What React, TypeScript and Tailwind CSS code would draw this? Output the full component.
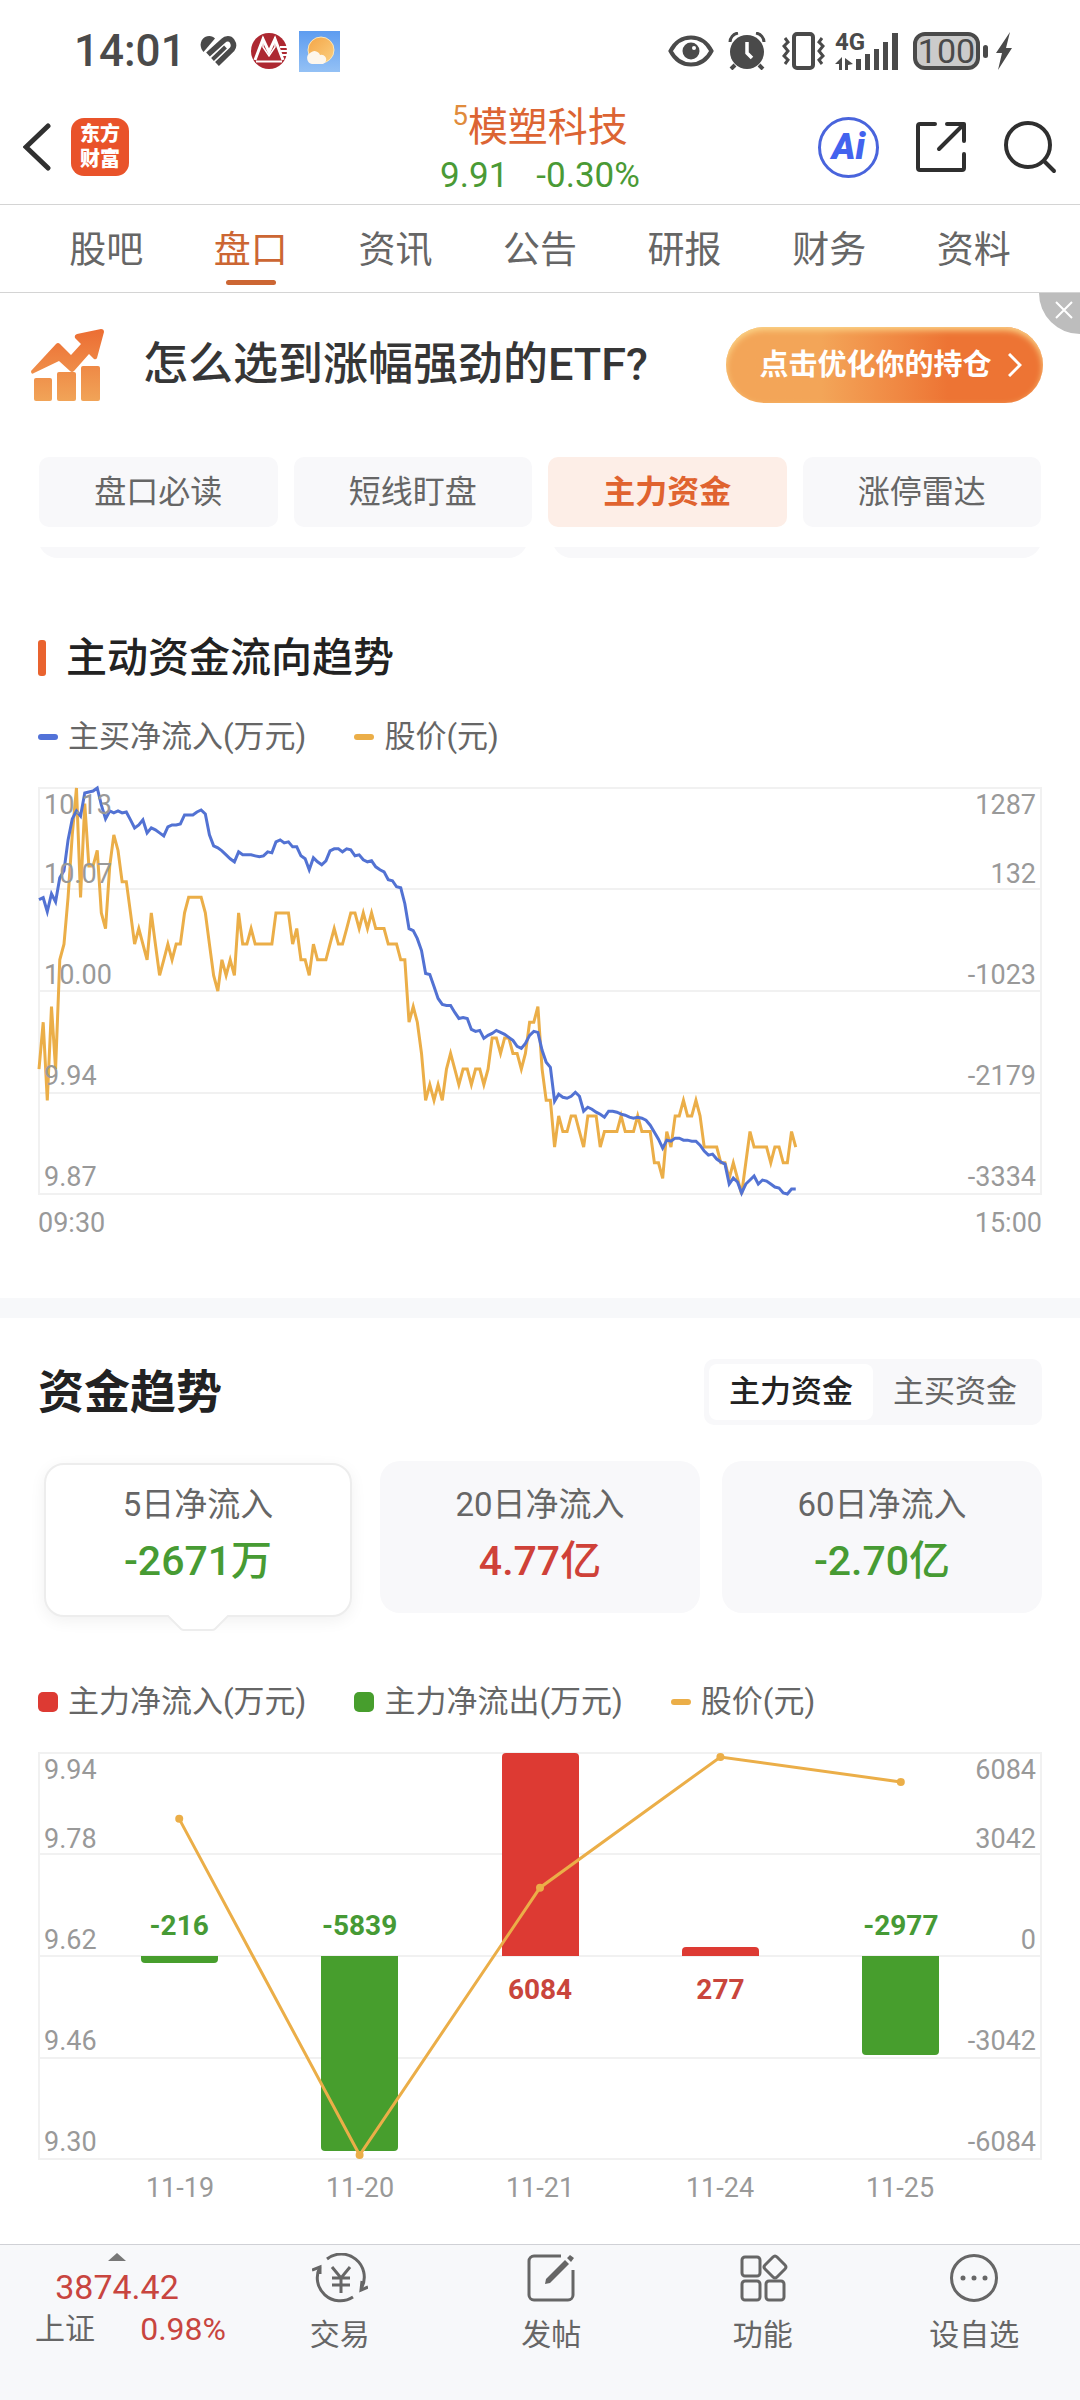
import { useState } from 'react';
import type { ReactNode } from 'react';
import { clsx } from 'clsx';

const TABS = ['股吧', '盘口', '资讯', '公告', '研报', '财务', '资料'];
const SHORTCUTS = ['盘口必读', '短线盯盘', '主力资金', '涨停雷达'];
const FUND_TYPES = ['主力资金', '主买资金'];

const PERIODS = [
  { label: '5日净流入', value: '-2671万', up: false },
  { label: '20日净流入', value: '4.77亿', up: true },
  { label: '60日净流入', value: '-2.70亿', up: false },
];

const DAYS = [
  { date: '11-19', flow: -216, y: 66 },
  { date: '11-20', flow: -5839, y: 403 },
  { date: '11-21', flow: 6084, y: 135 },
  { date: '11-24', flow: 277, y: 4 },
  { date: '11-25', flow: -2977, y: 29 },
];
const MAX_FLOW = 6084;

// one point per minute, in cents below the day high of 10.13
const PRICE = [
  18, 15, 20, 14, 18, 11, 10, 7, 3, 0, 7, 1, 5, 5, 4, 8, 9, 5, 3, 4, 6, 6, 8, 10, 9, 10, 11, 8, 10, 12,
  11, 10, 11, 10, 10, 8, 7, 7, 7, 7, 8, 10, 12, 13, 11, 12, 11, 12, 8, 10, 10, 9, 10, 10, 10, 10, 10, 8, 8, 8,
  8, 10, 9, 11, 11, 12, 10, 11, 11, 11, 10, 9, 10, 10, 9, 8, 8, 9, 8, 9, 8, 9, 9, 9, 10, 10, 10, 11, 11, 15,
  14, 15, 17, 20, 19, 20, 19, 20, 18, 17, 18, 19, 18, 18, 19, 18, 18, 19, 18, 16, 16, 17, 16, 16, 17, 17, 18, 17, 15, 15,
  14, 18, 20, 20, 23, 21, 22, 22, 21, 21, 22, 23, 21, 21, 21, 23, 22, 22, 22, 22, 21, 22, 22, 22, 21, 22, 22, 22, 24, 24,
  25, 22, 23, 21, 21, 20, 21, 21, 20, 21, 23, 23, 23, 23, 24, 24, 25, 24, 25, 26, 24, 22, 23, 23, 23, 23, 24, 23, 23, 24,
  24, 22, 23,
];

// net buying, already on the 0..407 plot scale
const NET_BUY = [
  112, 110, 124, 106, 114, 90, 83, 52, 31, 23, 28, 5, 4, 3, 0, 17, 31, 23, 25, 23, 25, 24, 32, 40, 37, 32, 45, 40, 42, 45,
  48, 39, 37, 37, 36, 27, 27, 27, 24, 22, 26, 47, 58, 60, 63, 67, 71, 74, 64, 67, 67, 67, 68, 69, 68, 64, 65, 54, 52, 55,
  54, 59, 59, 68, 71, 82, 70, 74, 77, 73, 63, 61, 61, 64, 61, 62, 68, 67, 72, 74, 73, 79, 82, 84, 92, 93, 99, 100, 116, 141,
  143, 151, 163, 186, 187, 199, 211, 217, 218, 218, 225, 231, 230, 231, 242, 244, 243, 251, 248, 246, 243, 245, 247, 250, 253, 259, 261, 256, 248, 244,
  245, 263, 275, 280, 314, 307, 310, 311, 309, 305, 309, 324, 320, 322, 325, 327, 330, 324, 324, 325, 327, 328, 330, 331, 330, 331, 333, 338, 345, 352,
  361, 353, 354, 351, 351, 353, 353, 354, 354, 358, 364, 368, 367, 372, 375, 377, 397, 391, 395, 406, 397, 393, 389, 397, 393, 394, 397, 400, 401, 406,
  407, 402, 402,
];

const toPoints = (values: number[], scale: number) =>
  values.map((v, i) => `${((i * 1003) / 241).toFixed(1)},${(v * scale).toFixed(1)}`).join(' ');

function StatusBar() {
  return (
    <div className="flex h-[90px] items-center justify-between pt-3 pr-[68px] pl-[74px] text-[#4a4a4a]">
      <div className="flex items-center">
        <span className="text-[44px] leading-[44px] font-medium">14:01</span>
        <svg className="ml-3.5 h-[32px] w-[37px]" viewBox="0 0 37 32" fill="none" stroke="#4a4a4a">
          <path d="M3.500 17C-1 12 0 5 5 2c4-2 8-1 10 1.500z" fill="#4a4a4a" stroke="none" />
          <path d="M8 19.500 23 6c3-3 7-3 9 0s2 6 0 8.500L17 29" strokeWidth="5.500" />
          <path d="M12.500 24.500 25.500 12" strokeWidth="4" />
        </svg>
        <svg className="ml-3.5 h-[36px] w-[36px]" viewBox="0 0 36 36">
          <circle cx="18" cy="18" r="18" fill="#ad2831" />
          <path d="M4 27 12 6l6 13 6-13 8 21" fill="none" stroke="#fff" strokeWidth="3" />
          <path d="M12 4v10l6 9 6-9V4" fill="none" stroke="#fff" strokeWidth="1.500" />
          <path d="M5 28.500h26M29 14h7M30 18h6M31 22h5" stroke="#fff" strokeWidth="2" />
          <path d="M10 25h16" stroke="#ad2831" strokeWidth="2" />
        </svg>
        <svg className="ml-3 h-[41px] w-[41px]" viewBox="0 0 41 41">
          <defs>
            <linearGradient id="sky" x1="0" y1="0" x2="0" y2="1">
              <stop offset="0" stopColor="#5d9cf0" />
              <stop offset="1" stopColor="#94c1f5" />
            </linearGradient>
            <linearGradient id="sun" x1="0" y1="0" x2="1" y2="1">
              <stop offset="0" stopColor="#f4a546" />
              <stop offset="1" stopColor="#fbcf80" />
            </linearGradient>
          </defs>
          <rect width="41" height="41" fill="url(#sky)" />
          <circle cx="22" cy="19" r="13" fill="url(#sun)" stroke="#fbe6b8" />
          <path d="M13 33a6 6 0 0 1-2-11 6 6 0 0 1 10 2 4.500 4.500 0 0 1 3 9z" fill="#fdf6ec" />
        </svg>
      </div>

      <div className="flex items-center">
        <svg className="h-[32px] w-[46px]" viewBox="0 0 46 32">
          <path d="M2.500 16C12-2 34-2 43.500 16 34 34 12 34 2.500 16z" fill="none" stroke="#4a4a4a" strokeWidth="4" />
          <circle cx="23" cy="16" r="8.500" fill="#4a4a4a" />
          <circle cx="26" cy="13" r="2" fill="#fff" />
        </svg>
        <svg className="ml-3.5 h-[38px] w-[38px]" viewBox="0 0 38 38" fill="none" stroke="#4a4a4a">
          <circle cx="19" cy="20" r="17" fill="#4a4a4a" stroke="none" />
          <path d="M2 10c0-4 3-8 8-9M36 10c0-4-3-8-8-9" strokeWidth="3" />
          <path d="M7 33l-4 4M31 33l4 4" strokeWidth="4" />
          <path d="M19 10v11l5 5" stroke="#fff" strokeWidth="3.500" />
        </svg>
        <svg className="ml-4 h-[38px] w-[43px]" viewBox="0 0 43 38" fill="none" stroke="#4a4a4a" strokeWidth="3">
          <rect x="12" y="2" width="19" height="34" rx="3" strokeWidth="4" />
          <path d="M3 6l3 4-4 4 4 5-4 5 4 4-3 4M40 6l-3 4 4 4-4 5 4 5-4 4 3 4" />
        </svg>
        <div className="relative ml-2.5 h-[38px] w-[64px]">
          <span className="absolute top-0 left-0 text-[24px] leading-[20px] font-bold">4G</span>
          <svg className="h-full w-full" viewBox="0 0 64 38" fill="#4a4a4a">
            <path d="M21 27h5v11h-5zM30 22h5v16h-5zM39 17h5v21h-5zM48 10h5v28h-5zM57 1h6v37h-6z" />
            <path d="M0 32l7-7v13H4v-6zM10 26l8 6-5 1v5h-3z" />
          </svg>
        </div>
        <div className="ml-3.5 flex h-[38px] w-[67px] items-center justify-center rounded-[12px] border-4 border-[#4a4a4a] bg-[#cbcbcb] text-[34px] leading-[30px]">
          100
        </div>
        <div className="ml-[3px] h-[13px] w-[5px] rounded-full bg-[#4a4a4a]" />
        <svg className="ml-2 h-[38px] w-[16px]" viewBox="0 0 16 38" fill="#4a4a4a">
          <path d="M14 0 0 21h6L2 38l14-22h-6z" />
        </svg>
      </div>
    </div>
  );
}

function Header() {
  return (
    <header className="grid h-[115px] grid-cols-[1fr_auto_1fr] items-center border-b border-[#d4d4d4] px-[23px]">
      <div className="flex items-center gap-5">
        <button aria-label="返回">
          <svg className="h-[48px] w-[28px]" viewBox="0 0 28 48" fill="none" stroke="#303030" strokeWidth="5" strokeLinecap="round">
            <path d="M25 3 3 24l22 21" />
          </svg>
        </button>
        <a
          href="#home"
          className="flex h-[58px] w-[58px] flex-col items-center justify-center rounded-[13px] bg-[#e9532a] text-[20px] leading-[25px] font-black text-white"
        >
          <span>东方</span>
          <span>财富</span>
        </a>
      </div>

      <div className="pt-2.5 text-center">
        <h1 className="flex justify-center text-[40px] leading-[48px] text-[#dc6433]">
          <span className="text-[28px] leading-[24px] text-[#e08b3c]">5</span>
          模塑科技
        </h1>
        <div className="flex justify-center gap-7 text-[35px] leading-[48px] text-[#4a9a35]">
          <span>9.91</span>
          <span>-0.30%</span>
        </div>
      </div>

      <div className="flex items-center justify-end">
        <button className="flex h-[61px] w-[61px] items-center justify-center rounded-full border-3 border-[#4964dc] text-[36px] leading-[40px] font-black text-[#4363ee] italic">
          Ai
        </button>
        <button aria-label="分享" className="ml-9">
          <svg className="h-[52px] w-[52px]" viewBox="0 0 52 52" fill="none" stroke="#2f2f2f" strokeWidth="4" strokeLinecap="round" strokeLinejoin="round">
            <path d="M20 3H5a2 2 0 0 0-2 2v42a2 2 0 0 0 2 2h42a2 2 0 0 0 2-2V33" />
            <path d="M32 3h17v17M48 4 24 28" />
          </svg>
        </button>
        <button aria-label="搜索" className="ml-9">
          <svg className="h-[54px] w-[54px]" viewBox="0 0 54 54" fill="none" stroke="#2f2f2f" strokeWidth="4" strokeLinecap="round">
            <circle cx="25" cy="25" r="22" />
            <path d="M41 41l10 10" />
          </svg>
        </button>
      </div>
    </header>
  );
}

function Banner() {
  return (
    <div className="relative flex h-[144px] items-center justify-between pr-[37px] pl-[31px]">
      <div className="flex items-center gap-[39px]">
        <svg className="h-[72px] w-[73px]" viewBox="0 0 73 72">
          <defs>
            <linearGradient id="rise" gradientUnits="userSpaceOnUse" x1="0" y1="0" x2="0" y2="72">
              <stop offset="0" stopColor="#ec6d33" />
              <stop offset="1" stopColor="#f1a458" />
            </linearGradient>
          </defs>
          <g fill="url(#rise)">
            <rect x="3" y="49" width="18" height="23" rx="2" />
            <rect x="26" y="43" width="19" height="29" rx="2" />
            <rect x="50" y="37" width="19" height="35" rx="2" />
            <path d="M3 44q-3 2-3-2L25 15q2-2 4 0l11 11 10-11-6-6q-1-3 2-4L70 0q3 0 3 3l-7 26q-1 2-3 1l-5-5-15 17q-2 2-4 0L28 32z" />
          </g>
        </svg>
        <p className="text-[45px] leading-[56px] font-medium text-[#363636]">怎么选到涨幅强劲的ETF?</p>
      </div>
      <button className="flex h-[76px] w-[317px] items-center justify-center gap-4 rounded-full bg-linear-to-r from-[#f3a558] from-30% to-[#ed7434] to-70% pl-3 text-[29px] leading-[40px] font-bold text-white shadow-[inset_0_3px_6px_#fbd68a]">
        点击优化你的持仓
        <svg className="h-[24px] w-[14px]" viewBox="0 0 14 24" fill="none" stroke="#fff" strokeWidth="3">
          <path d="M1 1l11 11L1 23" />
        </svg>
      </button>
      <button
        aria-label="关闭"
        className="absolute top-0 right-0 flex h-[41px] w-[41px] items-center justify-center rounded-bl-[41px] bg-[#bdbdbd] pb-2 pl-2"
      >
        <svg className="h-[18px] w-[18px]" viewBox="0 0 18 18" stroke="#fff" strokeWidth="2">
          <path d="M1 1l16 16M17 1 1 17" />
        </svg>
      </button>
    </div>
  );
}

function Legend({ items }: { items: { text: string; mark: string }[] }) {
  return (
    <ul className="flex gap-12 text-[31px] leading-[40px] text-[#666]">
      {items.map((item) => (
        <li key={item.text} className="flex items-center gap-2.5">
          <span className={clsx('w-5', item.mark)} />
          {item.text}
        </li>
      ))}
    </ul>
  );
}

// Four bands; the first one also carries the label for the top of the scale.
function Plot({ left, right, children }: { left: string[]; right: string[]; children: ReactNode }) {
  return (
    <div className="relative flex h-[408px] flex-col border-2 border-[#f1f1f1] text-[27px] leading-[32px] text-[#999]">
      <div className="absolute -inset-px flex flex-col">
        {left.slice(1).map((label, i) => (
          <div key={label} className={clsx('flex-1', i < 3 && 'border-b-2 border-[#f1f1f1]')} />
        ))}
      </div>
      <div className="absolute -inset-px">{children}</div>
      {left.slice(1).map((label, i) => (
        <div key={label} className="relative flex flex-1 flex-col justify-end px-1">
          {i === 0 && (
            <div className="mb-auto flex justify-between">
              <span>{left[0]}</span>
              <span>{right[0]}</span>
            </div>
          )}
          <div className="flex justify-between">
            <span>{label}</span>
            <span>{right[i + 1]}</span>
          </div>
        </div>
      ))}
    </div>
  );
}

function FlowChart() {
  return (
    <Plot left={['10.13', '10.07', '10.00', '9.94', '9.87']} right={['1287', '132', '-1023', '-2179', '-3334']}>
      <svg
        className="h-full w-full overflow-visible"
        viewBox="0 0 1003 407"
        preserveAspectRatio="none"
        fill="none"
        strokeWidth="3"
      >
        <polyline points={toPoints(PRICE, 407 / 26)} stroke="#ebae48" vectorEffect="non-scaling-stroke" />
        <polyline points={toPoints(NET_BUY, 1)} stroke="#5272d3" vectorEffect="non-scaling-stroke" />
      </svg>
    </Plot>
  );
}

function DailyChart() {
  const x = (i: number) => 90 + i * 180;
  return (
    <Plot left={['9.94', '9.78', '9.62', '9.46', '9.30']} right={['6084', '3042', '0', '-3042', '-6084']}>
      <div className="relative mx-[50px] flex h-full text-[28px] leading-[32px] font-bold">
        {DAYS.map((day) => {
          const up = day.flow > 0;
          const height = `${(Math.abs(day.flow) / MAX_FLOW) * 100}%`;
          return (
            <div key={day.date} className="flex flex-1 flex-col items-center">
              <div className="flex h-1/2 w-full items-end justify-center">
                {up ? (
                  <div className="w-[77px] rounded-t-[4px] bg-[#dd3a33]" style={{ height }} />
                ) : (
                  <span className="pb-3.5 text-[#469a35]">{day.flow}</span>
                )}
              </div>
              <div className="flex h-1/2 w-full items-start justify-center">
                {up ? (
                  <span className="pt-4.5 text-[#c9453c]">{day.flow}</span>
                ) : (
                  <div className="w-[77px] rounded-b-[4px] bg-[#479e2d]" style={{ height }} />
                )}
              </div>
            </div>
          );
        })}
        <svg
          className="absolute inset-0 h-full w-full overflow-visible"
          viewBox="0 0 900 407"
          preserveAspectRatio="none"
          fill="none"
          stroke="#ebae48"
          strokeLinecap="round"
        >
          <polyline
            points={DAYS.map((d, i) => `${x(i)},${d.y}`).join(' ')}
            strokeWidth="3"
            vectorEffect="non-scaling-stroke"
          />
          {DAYS.map((d, i) => (
            <path key={d.date} d={`M${x(i)} ${d.y}h0.010`} strokeWidth="8" vectorEffect="non-scaling-stroke" />
          ))}
        </svg>
      </div>
    </Plot>
  );
}

const NAV = [
  {
    label: '交易',
    icon: (
      <svg className="h-[50px] w-[56px]" viewBox="0 0 56 50" fill="none" stroke="#666" strokeWidth="3">
        <path d="M15 6a23 23 0 0 1 35 28M41 44A23 23 0 0 1 8 14" />
        <path d="M0 17l8-3v7M56 34l-7 3 1-9" />
        <path d="M20 14l9 11 9-11M29 25v15M20 25h18M20 32h18" />
      </svg>
    ),
  },
  {
    label: '发帖',
    icon: (
      <svg className="h-[50px] w-[50px]" viewBox="0 0 50 50" fill="none" stroke="#666" strokeWidth="3">
        <path d="M35 3H8a5 5 0 0 0-5 5v34a5 5 0 0 0 5 5h34a5 5 0 0 0 5-5V17" />
        <path d="M19 31l1-5 19-19 4 4-19 19zM41 5l3-3 4 3-3 4z" fill="#666" stroke="none" />
      </svg>
    ),
  },
  {
    label: '功能',
    icon: (
      <svg className="h-[50px] w-[50px]" viewBox="0 0 50 50" fill="none" stroke="#666" strokeWidth="3">
        <rect x="4" y="4" width="18" height="19" rx="3" />
        <rect x="4" y="28" width="18" height="19" rx="3" />
        <rect x="28" y="28" width="18" height="19" rx="3" />
        <path d="M35 4q2-2 4 0l8 8q2 2 0 4l-8 8q-2 2-4 0l-8-8q-2-2 0-4z" />
      </svg>
    ),
  },
  {
    label: '设自选',
    icon: (
      <svg className="h-[50px] w-[50px]" viewBox="0 0 50 50" fill="none" stroke="#666" strokeWidth="3">
        <circle cx="25" cy="25" r="22.500" />
        <path d="M14 25h0.010M25 25h0.010M36 25h0.010" strokeWidth="5" strokeLinecap="round" />
      </svg>
    ),
  },
];

function BottomNav() {
  return (
    <nav className="sticky bottom-0 mt-auto flex h-[156px] border-t border-[#d0d1d6] bg-[#f7f8fa] pt-2 text-[30px] leading-[40px] text-[#666]">
      <a href="#index" className="flex w-[234px] flex-col items-center">
        <svg className="h-[8px] w-[18px]" viewBox="0 0 18 8" fill="#777">
          <path d="M9 0l9 8H0z" />
        </svg>
        <span className="mt-1 text-[34px] leading-[44px] text-[#c8453f]">3874.42</span>
        <span className="flex w-full items-center justify-between pr-2 pl-[35px]">
          上证
          <span className="text-[32px] text-[#c8453f]">0.98%</span>
        </span>
      </a>
      {NAV.map((item) => (
        <a key={item.label} href="#nav" className="flex flex-1 flex-col items-center gap-3">
          {item.icon}
          {item.label}
        </a>
      ))}
    </nav>
  );
}

export default function App() {
  const [tab, setTab] = useState('盘口');
  const [shortcut, setShortcut] = useState('主力资金');
  const [fundType, setFundType] = useState('主力资金');
  const [period, setPeriod] = useState('5日净流入');

  return (
    <div className="flex min-h-screen flex-col bg-white font-[Roboto,'Noto_Sans_CJK_SC',sans-serif]">
      <StatusBar />
      <Header />

      <div className="flex h-[88px] border-b border-[#d4d4d4] px-[34px]">
        {TABS.map((name) => (
          <button
            key={name}
            onClick={() => setTab(name)}
            className={clsx(
              'relative flex-1 pt-1 text-[37px] leading-[48px]',
              tab === name ? 'text-[#cc6633]' : 'text-[#666]',
            )}
          >
            {name}
            {tab === name && (
              <span className="absolute bottom-[7px] left-1/2 h-[5px] w-[50px] -translate-x-1/2 rounded-full bg-[#cc6633]" />
            )}
          </button>
        ))}
      </div>

      <Banner />

      <div className="flex gap-4 px-[39px] pt-5">
        {SHORTCUTS.map((name) => (
          <button
            key={name}
            onClick={() => setShortcut(name)}
            className={clsx(
              'h-[70px] flex-1 rounded-[10px] text-[32px] leading-[40px]',
              shortcut === name ? 'bg-[#fdeee7] font-bold text-[#e0632f]' : 'bg-[#f8f8fa] text-[#666]',
            )}
          >
            {name}
          </button>
        ))}
      </div>
      <div className="mt-5 flex h-[11px] items-end gap-6 overflow-hidden px-[38px]">
        <div className="h-[40px] flex-1 rounded-[20px] bg-[#f8f8fa]" />
        <div className="h-[40px] flex-1 rounded-[20px] bg-[#f8f8fa]" />
      </div>

      <section className="px-[38px] pt-[70px] pb-[55px]">
        <h2 className="flex items-center gap-5 text-[41px] leading-[60px] font-medium text-[#222]">
          <span className="h-[36px] w-[8px] rounded-[3px] bg-[#e9632f]" />
          主动资金流向趋势
        </h2>
        <div className="mt-[29px] mb-[30px]">
          <Legend
            items={[
              { text: '主买净流入(万元)', mark: 'h-1.5 rounded-full bg-[#5272d8]' },
              { text: '股价(元)', mark: 'h-1.5 rounded-full bg-[#ebae48]' },
            ]}
          />
        </div>
        <FlowChart />
        <div className="mt-2 flex justify-between text-[27px] leading-[40px] text-[#999]">
          <span>09:30</span>
          <span>15:00</span>
        </div>
      </section>

      <div className="h-5 bg-[#f7f8fa]" />

      <section className="px-[38px] pt-[41px]">
        <div className="flex items-center justify-between">
          <h2 className="text-[46px] leading-[60px] font-bold text-[#222]">资金趋势</h2>
          <div className="flex rounded-[10px] bg-[#f8f8fa] p-[5px]">
            {FUND_TYPES.map((name) => (
              <button
                key={name}
                onClick={() => setFundType(name)}
                className={clsx(
                  'h-[56px] rounded-[8px] px-5 text-[31px] leading-[40px]',
                  fundType === name ? 'bg-white font-medium text-[#222]' : 'text-[#666]',
                )}
              >
                {name}
              </button>
            ))}
          </div>
        </div>

        <div className="mt-9 flex gap-[22px]">
          {PERIODS.map((item) => {
            const active = period === item.label;
            return (
              <button
                key={item.label}
                onClick={() => setPeriod(item.label)}
                className={clsx(
                  'relative flex h-[152px] flex-1 flex-col items-center rounded-[20px] pt-5',
                  !active && 'bg-[#f8f8fa]',
                )}
              >
                {active && (
                  <span className="absolute inset-x-1.5 top-0.5 -bottom-1 rounded-[20px] border-2 border-[#ededed] bg-white shadow-[0_4px_16px_rgba(0,0,0,0.06)]">
                    <svg
                      className="absolute top-full left-1/2 h-[16px] w-[62px] -translate-x-1/2"
                      viewBox="0 0 62 16"
                      fill="#fff"
                      stroke="#ededed"
                      strokeWidth="2"
                    >
                      <path d="M0-1 1 1l13 13q1 1 3 1h28q2 0 3-1L61 1l1-2" />
                    </svg>
                  </span>
                )}
                <span className="relative text-[33px] leading-[48px] text-[#666]">{item.label}</span>
                <span
                  className={clsx(
                    'relative mt-2 text-[41px] leading-[48px] font-medium',
                    item.up ? 'text-[#cf4138]' : 'text-[#479b33]',
                  )}
                >
                  {item.value}
                </span>
              </button>
            );
          })}
        </div>

        <div className="mt-[69px] mb-[30px]">
          <Legend
            items={[
              { text: '主力净流入(万元)', mark: 'h-5 rounded-[5px] bg-[#dd3a33]' },
              { text: '主力净流出(万元)', mark: 'h-5 rounded-[5px] bg-[#479e2d]' },
              { text: '股价(元)', mark: 'h-1.5 rounded-full bg-[#ebae48]' },
            ]}
          />
        </div>
        <DailyChart />
        <div className="mx-[52px] mt-2 flex text-center text-[27px] leading-[40px] text-[#999]">
          {DAYS.map((day) => (
            <span key={day.date} className="flex-1">
              {day.date}
            </span>
          ))}
        </div>
      </section>

      <BottomNav />
    </div>
  );
}
